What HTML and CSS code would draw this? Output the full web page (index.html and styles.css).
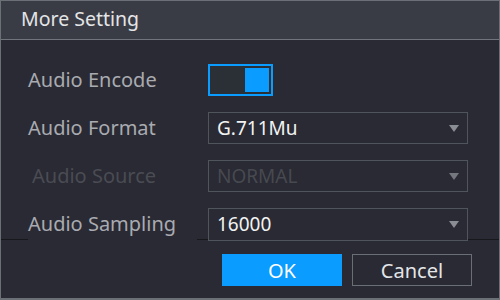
FILE: index.html
```html
<!DOCTYPE html>
<html lang="en">
<head>
    <meta charset="UTF-8">
    <meta name="viewport" content="width=device-width, initial-scale=1.0">
    <title>More Setting</title>
    <link rel="stylesheet" href="styles.css">
</head>
<body>
    <div class="dialog">
        <div class="dialog-title">More Setting</div>
        <div class="dialog-body">
            <div class="row">
                <span class="label">Audio Encode</span>
                <div class="toggle on"><span class="knob"></span></div>
            </div>
            <div class="row">
                <span class="label">Audio Format</span>
                <div class="select"><span class="value">G.711Mu</span><span class="arrow"></span></div>
            </div>
            <div class="row disabled">
                <span class="label">Audio Source</span>
                <div class="select"><span class="value">NORMAL</span><span class="arrow"></span></div>
            </div>
            <div class="row last">
                <span class="label">Audio Sampling</span>
                <div class="select"><span class="value">16000</span><span class="arrow"></span></div>
            </div>
            <div class="button-row">
                <button class="btn btn-primary">OK</button>
                <button class="btn">Cancel</button>
            </div>
        </div>
    </div>
</body>
</html>
```

FILE: styles.css
```css
* {
    box-sizing: border-box;
}

body {
    margin: 0;
    font-family: 'Noto Sans', 'DejaVu Sans', sans-serif;
    background-color: #292a33;
}

.dialog {
    width: 500px;
    height: 300px;
    border: 1px solid #6b6f76;
    border-bottom-width: 2px;
    background-color: #292a33;
    display: flex;
    flex-direction: column;
}

.dialog-title {
    height: 39px;
    padding-left: 20px;
    background-color: #3a3c45;
    border-bottom: 1px solid #70747b;
    color: #e4e5e7;
    font-size: 19.5px;
    line-height: 36px;
}

.dialog-body {
    padding: 24px 0 0 0;
    display: flex;
    flex-direction: column;
    gap: 16px;
}

.row {
    display: flex;
    align-items: center;
    height: 32px;
    padding-left: 27px;
}

.row.last {
    border-bottom: 1px solid #17181c;
    height: 32px;
}

.label {
    width: 180px;
    color: #a9abb1;
    font-size: 20px;
    line-height: 32px;
    background-color: #292a33;
}

.row.last .label {
    width: 169px;
    margin-right: 11px;
    margin-bottom: -1px;
    height: 33px;
}

.row.disabled .label {
    color: #4a4c53;
    padding-left: 4px;
}

.toggle {
    width: 65px;
    height: 32px;
    border: 2px solid #0a9cff;
    background-color: #2b3036;
    padding: 2px;
    display: flex;
    justify-content: flex-end;
}

.knob {
    width: 24px;
    height: 24px;
    background-color: #0a9cff;
}

.select {
    width: 260px;
    height: 32px;
    border: 1px solid #50555c;
    background-color: #292a33;
    display: flex;
    align-items: center;
    justify-content: space-between;
    padding: 0 8px 0 8px;
}

.row.last .select {
    margin-bottom: -1px;
    height: 33px;
}

.value {
    color: #f2f2f2;
    font-size: 19px;
}

.row.disabled .value {
    color: #474950;
}

.arrow {
    width: 0;
    height: 0;
    border-left: 5px solid transparent;
    border-right: 5px solid transparent;
    border-top: 7px solid #8a8d93;
}

.row.disabled .arrow {
    border-top-color: #74777d;
}

.button-row {
    display: flex;
    justify-content: flex-end;
    gap: 10px;
    padding-right: 27px;
    margin-top: -2px;
}

.btn {
    width: 120px;
    height: 32px;
    border: 1px solid #6a6e75;
    background-color: #292a33;
    color: #e4e5e7;
    font-family: inherit;
    font-size: 20px;
    padding: 0;
    cursor: pointer;
}

.btn-primary {
    background-color: #0a9cff;
    border-color: #0a9cff;
    color: #ffffff;
}
```
